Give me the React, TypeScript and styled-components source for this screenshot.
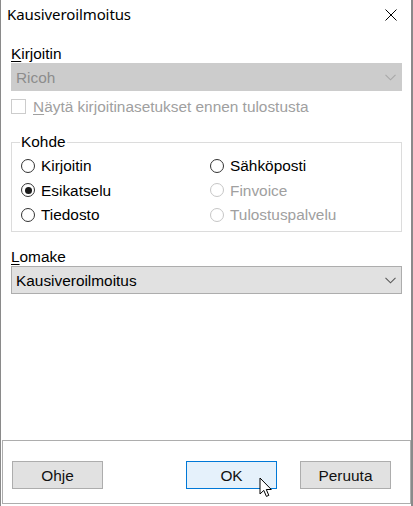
import React from "react";
import styled, { createGlobalStyle } from "styled-components";

const Global = createGlobalStyle`
  html, body { margin: 0; padding: 0; background: #ffffff; }
  * { box-sizing: border-box; }
`;

const Window = styled.div`
  position: relative;
  width: 413px;
  height: 506px;
  background: #ffffff;
  border-left: 1px solid #8a8a8a;
  border-right: 2px solid #8a8a8a;
  display: flex;
  flex-direction: column;
  font-family: "Liberation Sans", Arial, sans-serif;
  font-size: 15.4px;
  color: #000000;
`;

const TitleBar = styled.div`
  height: 31px;
  flex: none;
  display: flex;
  align-items: center;
  justify-content: space-between;
  padding: 0 14px 0 6px;
`;

const TitleText = styled.span`
  font-family: "Noto Sans", "Open Sans", sans-serif;
  font-size: 15px;
  line-height: 18px;
  padding-bottom: 3px;
  letter-spacing: -0.1px;
`;

const CloseIcon = styled.svg`
  width: 12px;
  height: 12px;
  margin-bottom: 2px;
`;

const Body = styled.div`
  display: flex;
  flex-direction: column;
  padding: 14px 9px 0 10px;
`;

const FieldLabel = styled.div<{ $gap?: number }>`
  height: 17px;
  line-height: 17px;
  margin-top: ${(p) => p.$gap ?? 0}px;
`;

const Key = styled.span`
  text-decoration: underline;
  text-underline-offset: 2px;
`;

const Combo = styled.div<{ $disabled?: boolean }>`
  margin-top: 1px;
  height: 28px;
  display: flex;
  align-items: center;
  justify-content: space-between;
  padding: 0 5px 0 4px;
  border: 1px solid ${(p) => (p.$disabled ? "#cccccc" : "#adadad")};
  background: ${(p) => (p.$disabled ? "#cccccc" : "#e1e1e1")};
  color: ${(p) => (p.$disabled ? "#8d8d8d" : "#000000")};
  line-height: 17px;
`;

const Chevron = styled.svg`
  width: 11px;
  height: 7px;
  margin-top: 1px;
`;

const CheckRow = styled.div`
  margin-top: 6px;
  height: 18px;
  display: flex;
  align-items: center;
  gap: 7px;
  color: #a0a0a0;
  line-height: 17px;
`;

const CheckBox = styled.span`
  width: 15px;
  height: 15px;
  border: 1px solid #cccccc;
  background: #ffffff;
  flex: none;
`;

const Group = styled.fieldset`
  margin: 18px 0 0 0;
  padding: 0 9px 4px 9px;
  border: 1px solid #dcdcdc;
  min-width: 0;
`;

const Legend = styled.legend`
  padding: 0 1px;
  margin-left: -1px;
  line-height: 18px;
  height: 18px;
`;

const RadioGrid = styled.div`
  margin-top: 2.5px;
  display: grid;
  grid-template-columns: 189px 1fr;
  grid-auto-rows: 24.5px;
`;

const RadioItem = styled.div<{ $disabled?: boolean }>`
  display: flex;
  align-items: center;
  gap: 6px;
  line-height: 17px;
  color: ${(p) => (p.$disabled ? "#a0a0a0" : "#000000")};
`;

const RadioCircle = styled.span<{ $disabled?: boolean; $checked?: boolean }>`
  width: 14px;
  height: 14px;
  border-radius: 50%;
  border: 1.3px solid ${(p) => (p.$disabled ? "#c6c6c6" : "#333333")};
  background: #ffffff;
  flex: none;
  display: flex;
  align-items: center;
  justify-content: center;
  &::after {
    content: "";
    display: ${(p) => (p.$checked ? "block" : "none")};
    width: 7px;
    height: 7px;
    border-radius: 50%;
    background: #1a1a1a;
  }
`;

const ButtonPanel = styled.div`
  margin: auto 0 2px 1px;
  height: 64px;
  flex: none;
  border: 1px solid #adadad;
  display: flex;
  align-items: flex-start;
  padding: 20px 19px 0 9px;
`;

const Spacer = styled.div`
  flex: 1;
`;

const Button = styled.div<{ $default?: boolean }>`
  width: 91px;
  height: 28px;
  display: flex;
  align-items: center;
  justify-content: center;
  border: 1px solid ${(p) => (p.$default ? "#0078d7" : "#adadad")};
  background: ${(p) => (p.$default ? "#e5f1fb" : "#e1e1e1")};
  line-height: 17px;
  color: #111111;
  & + & {
    margin-left: 23px;
  }
`;

const Cursor = styled.svg`
  position: absolute;
  left: 258px;
  top: 477px;
  width: 14px;
  height: 21px;
`;

const radios: { label: string; disabled?: boolean; checked?: boolean }[] = [
  { label: "Kirjoitin" },
  { label: "Sähköposti" },
  { label: "Esikatselu", checked: true },
  { label: "Finvoice", disabled: true },
  { label: "Tiedosto" },
  { label: "Tulostuspalvelu", disabled: true },
];

export default function App() {
  return (
    <>
      <Global />
      <Window>
        <TitleBar>
          <TitleText>Kausiveroilmoitus</TitleText>
          <CloseIcon viewBox="0 0 12 12">
            <path d="M0.5 0.5 L11.5 11.5 M11.5 0.5 L0.5 11.5" stroke="#000" strokeWidth="1" fill="none" />
          </CloseIcon>
        </TitleBar>
        <Body>
          <FieldLabel>
            <Key>K</Key>irjoitin
          </FieldLabel>
          <Combo $disabled>
            <span>Ricoh</span>
            <Chevron viewBox="0 0 11 7">
              <path d="M0.5 0.8 L5.5 5.8 L10.5 0.8" stroke="#a8a8a8" strokeWidth="1.1" fill="none" />
            </Chevron>
          </Combo>
          <CheckRow>
            <CheckBox />
            <span>
              <Key>N</Key>äytä kirjoitinasetukset ennen tulostusta
            </span>
          </CheckRow>
          <Group>
            <Legend>Kohde</Legend>
            <RadioGrid>
              {radios.map((r) => (
                <RadioItem key={r.label} $disabled={r.disabled}>
                  <RadioCircle $disabled={r.disabled} $checked={r.checked} />
                  <span>{r.label}</span>
                </RadioItem>
              ))}
            </RadioGrid>
          </Group>
          <FieldLabel $gap={16}>
            <Key>L</Key>omake
          </FieldLabel>
          <Combo>
            <span>Kausiveroilmoitus</span>
            <Chevron viewBox="0 0 11 7">
              <path d="M0.5 0.8 L5.5 5.8 L10.5 0.8" stroke="#5a5a5a" strokeWidth="1.1" fill="none" />
            </Chevron>
          </Combo>
        </Body>
        <ButtonPanel>
          <Button>Ohje</Button>
          <Spacer />
          <Button $default>OK</Button>
          <Button>Peruuta</Button>
        </ButtonPanel>
        <Cursor viewBox="0 0 14 21">
          <path
            d="M1 1 L1 17 L4.8 13.4 L7.4 19.4 L9.8 18.4 L7.3 12.5 L12.3 12.5 Z"
            fill="#ffffff"
            stroke="#000000"
            strokeWidth="1"
            strokeLinejoin="miter"
          />
        </Cursor>
      </Window>
    </>
  );
}
